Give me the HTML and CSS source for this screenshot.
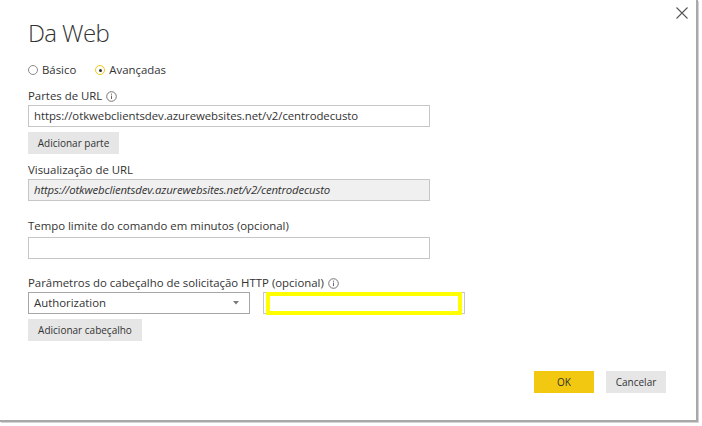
FILE: index.html
```html
<!DOCTYPE html>
<html lang="pt">
<head>
<meta charset="utf-8">
<title>Da Web</title>
<link rel="stylesheet" href="styles.css">
</head>
<body>
<div class="dialog">
  <button class="close" aria-label="Fechar">
    <svg width="12" height="12" viewBox="0 0 12 12"><path d="M0.5 0.5 L11.5 11.5 M11.5 0.5 L0.5 11.5" stroke="#555" stroke-width="1.1" fill="none"/></svg>
  </button>
  <h1 class="title">Da Web</h1>
  <div class="radios">
    <span class="radio"><span class="dot"></span>Básico</span>
    <span class="radio checked"><span class="dot"></span>Avançadas</span>
  </div>
  <div class="label l-url">Partes de URL <svg class="info" width="11" height="11" viewBox="0 0 11 11"><circle cx="5.5" cy="5.5" r="4.8" stroke="#666" stroke-width="0.9" fill="none"/><path d="M5.5 4.6 V8" stroke="#666" stroke-width="1"/><circle cx="5.5" cy="3.2" r="0.6" fill="#666"/></svg></div>
  <div class="field f-url">https://otkwebclientsdev.azurewebsites.net/v2/centrodecusto</div>
  <div class="btn b-part">Adicionar parte</div>
  <div class="label l-preview">Visualização de URL</div>
  <div class="field preview">https://otkwebclientsdev.azurewebsites.net/v2/centrodecusto</div>
  <div class="label l-time">Tempo limite do comando em minutos (opcional)</div>
  <div class="field f-time"></div>
  <div class="label l-head">Parâmetros do cabeçalho de solicitação HTTP (opcional) <svg class="info" width="11" height="11" viewBox="0 0 11 11"><circle cx="5.5" cy="5.5" r="4.8" stroke="#666" stroke-width="0.9" fill="none"/><path d="M5.5 4.6 V8" stroke="#666" stroke-width="1"/><circle cx="5.5" cy="3.2" r="0.6" fill="#666"/></svg></div>
  <div class="header-row">
    <div class="select">Authorization<svg class="arrow" width="6" height="4" viewBox="0 0 6 4"><path d="M0 0 H6 L3 3.5 Z" fill="#7a7a7a"/></svg></div>
    <div class="field value"><span class="highlight"></span></div>
  </div>
  <div class="btn b-head">Adicionar cabeçalho</div>
  <div class="footer">
    <div class="btn ok">OK</div>
    <div class="btn cancel">Cancelar</div>
  </div>
</div>
</body>
</html>
```
FILE: styles.css
```css
html, body {
  margin: 0;
  padding: 0;
  background: #ffffff;
}
body {
  width: 702px;
  height: 426px;
  overflow: hidden;
  font-family: "Open Sans", "Noto Sans", sans-serif;
  font-size: 11.4px;
  color: #333333;
}
.dialog {
  position: relative;
  width: 698px;
  height: 422px;
  box-sizing: border-box;
  padding: 0 0 0 28px;
  background: #ffffff;
  border-right: 2px solid #a8a8a8;
  border-bottom: 2px solid #a8a8a8;
  box-shadow: 1px 1px 0 #d4d4d4;
  overflow: hidden;
}
.close {
  position: absolute;
  top: 7px;
  left: 676px;
  width: 12px;
  height: 12px;
  padding: 0;
  border: 0;
  background: none;
  display: block;
}
.close svg { display: block; }
.title {
  margin: 18px 0 0 0;
  font-size: 24px;
  line-height: 30px;
  font-weight: 300;
  letter-spacing: -0.6px;
  color: #333333;
}
.radios {
  margin-top: 14px;
  height: 16px;
  line-height: 16px;
  display: flex;
  gap: 19px;
}
.radio {
  display: flex;
  align-items: center;
  gap: 4px;
}
.dot {
  width: 10px;
  height: 10px;
  box-sizing: border-box;
  border-radius: 50%;
  border: 1.5px solid #8a8a8a;
  display: flex;
  align-items: center;
  justify-content: center;
}
.radio.checked .dot {
  border-color: #f2c811;
}
.radio.checked .dot::after {
  content: "";
  width: 3px;
  height: 3px;
  border-radius: 50%;
  background: #333333;
}
.label {
  line-height: 16px;
  height: 16px;
  display: flex;
  align-items: center;
  gap: 4px;
}
.info { display: block; }
.l-url { margin-top: 10px; }
.l-preview { margin-top: 8px; }
.l-time { margin-top: 17px; }
.l-head { margin-top: 16px; }
.field {
  box-sizing: border-box;
  width: 402px;
  height: 22px;
  border: 1px solid #c6c6c6;
  padding: 0 5px;
  line-height: 20px;
  background: #ffffff;
  white-space: nowrap;
  letter-spacing: -0.06px;
}
.f-url { margin-top: 1px; }
.preview {
  margin-top: 1px;
  background: #f0f0f0;
  font-style: italic;
  letter-spacing: -0.15px;
}
.f-time { margin-top: 3px; }
.btn {
  box-sizing: border-box;
  height: 22px;
  line-height: 22px;
  background: #e6e6e6;
  text-align: center;
  white-space: nowrap;
  font-size: 10px;
}
.b-part { margin-top: 5px; width: 91px; }
.b-head { margin-top: 5px; width: 114px; }
.header-row {
  margin-top: 1px;
  display: flex;
  gap: 13px;
}
.select {
  box-sizing: border-box;
  width: 222px;
  height: 22px;
  border: 1px solid #a6a6a6;
  padding: 0 10px 0 5px;
  line-height: 20px;
  display: flex;
  align-items: center;
  justify-content: space-between;
}
.arrow { display: block; }
.value {
  position: relative;
  width: 202px;
}
.highlight {
  position: absolute;
  left: 2px;
  top: -1px;
  width: 196px;
  height: 23px;
  box-sizing: border-box;
  border: 4px solid #ffff00;
}
.footer {
  margin-top: 30px;
  padding-right: 30px;
  display: flex;
  justify-content: flex-end;
  gap: 12px;
}
.ok {
  width: 60px;
  background: #f2c811;
}
.cancel {
  width: 60px;
}
```
